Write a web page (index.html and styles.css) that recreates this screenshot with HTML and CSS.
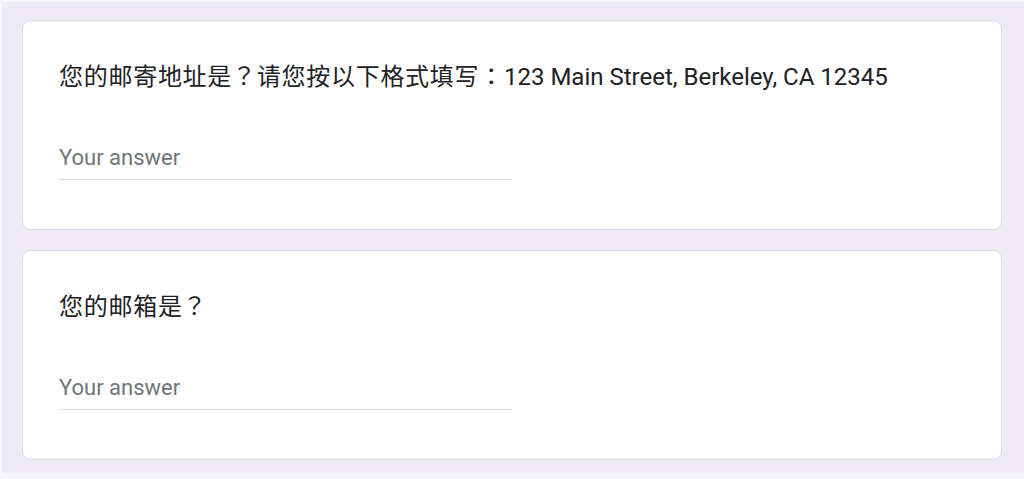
FILE: index.html
```html
<!DOCTYPE html>
<html lang="zh-CN">
<head>
<meta charset="utf-8">
<title>Form</title>
<link rel="stylesheet" href="styles.css">
</head>
<body>
<div class="page">
  <div class="card">
    <div class="question"><span class="zh">您的邮寄地址是<span class="fw" lang="zh-TW">？</span>请您按以下格式填写<span class="fw" lang="zh-TW">：</span></span>123 Main Street, Berkeley, CA 12345</div>
    <div class="answer"><span class="placeholder">Your answer</span></div>
  </div>
  <div class="card">
    <div class="question"><span class="zh">您的邮箱是<span class="fw" lang="zh-TW">？</span></span></div>
    <div class="answer"><span class="placeholder">Your answer</span></div>
  </div>
</div>
</body>
</html>
```

FILE: styles.css
```css
html, body {
  margin: 0;
  padding: 0;
  background: #f7f6fb;
}
body {
  font-family: Roboto, "Noto Sans CJK SC", "Liberation Sans", sans-serif;
  height: 479px;
  overflow: hidden;
}
.page {
  margin: 2px 0 0 2px;
  background: #eeebf7;
  padding: 18px 0 13px 20px;
  display: flex;
  flex-direction: column;
  gap: 20px;
}
.card {
  box-sizing: border-box;
  width: 980px;
  height: 210px;
  background: #ffffff;
  border: 1px solid #dadce0;
  border-radius: 9px;
  padding: 38px 36px 0 36px;
}
.question {
  font-size: 24px;
  line-height: 36px;
  color: #202124;
}
.zh {
  letter-spacing: 0.72px;
  line-height: 1;
}
.fw {
  font-family: "Noto Sans CJK TC", "Noto Sans CJK SC", sans-serif;
  line-height: 1;
}
.answer {
  margin-top: 48px;
  width: 453px;
  border-bottom: 1.5px solid #dadce0;
  padding-bottom: 6px;
}
.placeholder {
  display: block;
  font-size: 22px;
  line-height: 30px;
  color: #70757a;
}
```
